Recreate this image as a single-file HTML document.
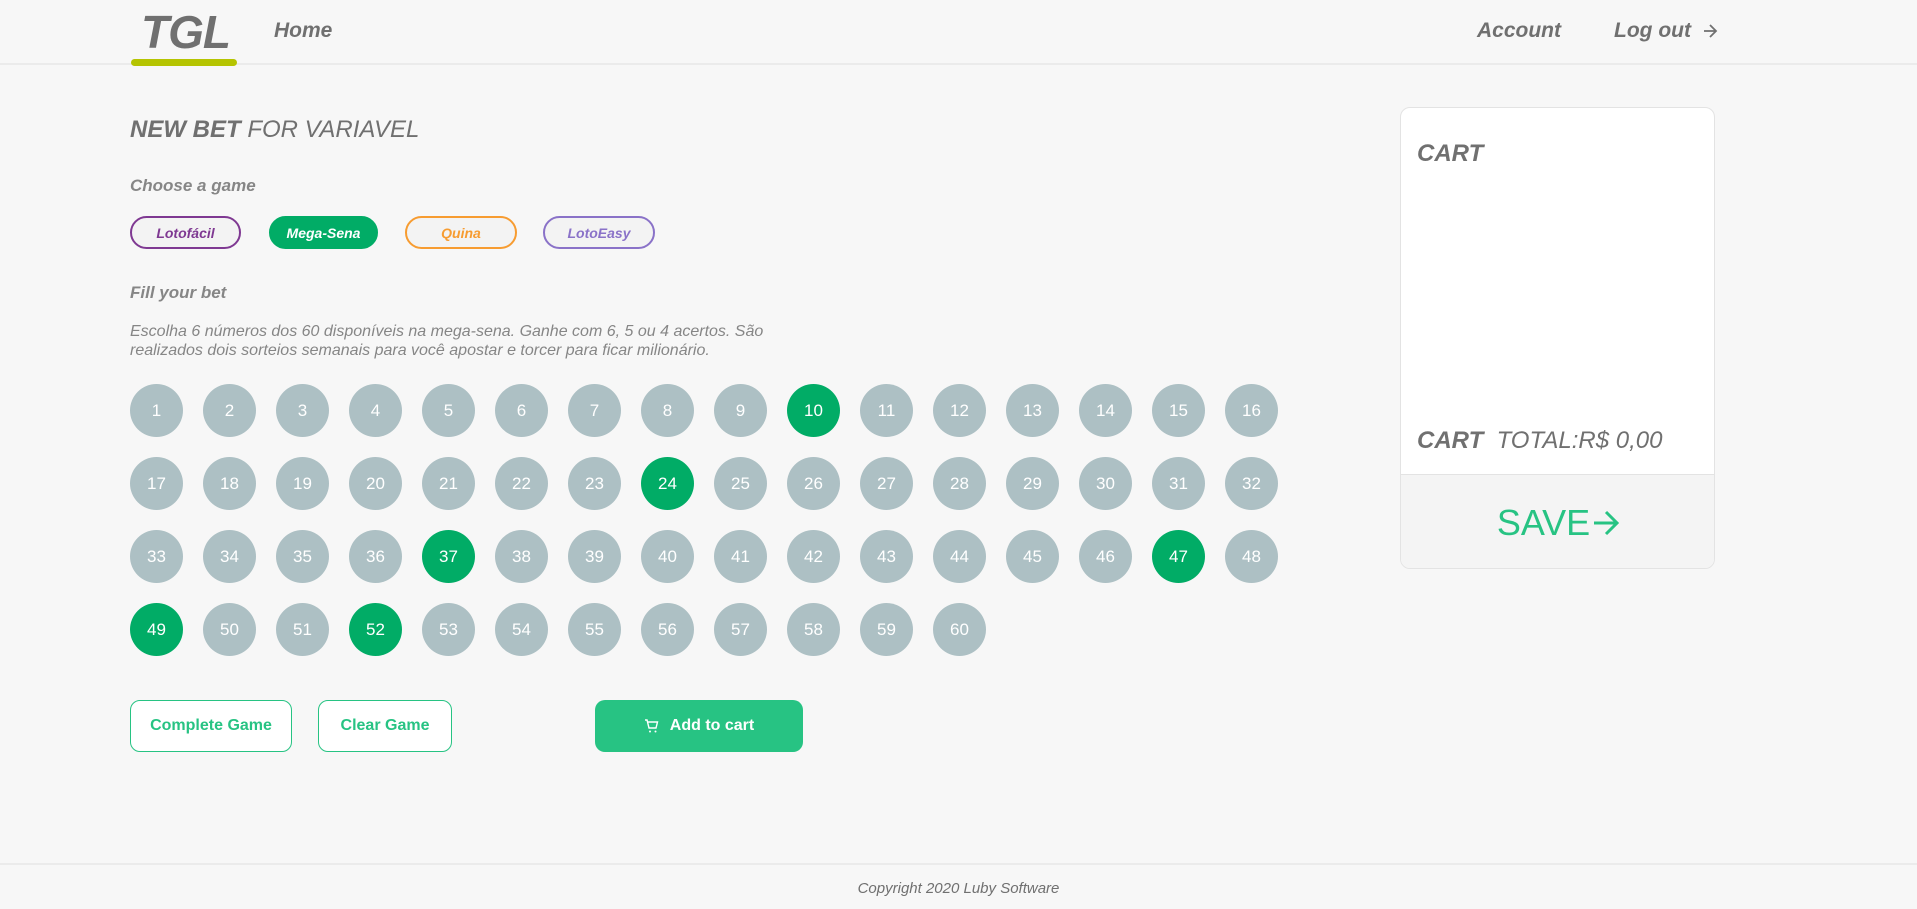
<!DOCTYPE html>
<html><head><meta charset="utf-8"><style>
*{box-sizing:border-box;margin:0;padding:0}
body{width:1917px;height:909px;background:#f7f7f7;font-family:"Liberation Sans",sans-serif;color:#707070;position:relative;overflow:hidden;font-style:italic}
.a{position:absolute;white-space:nowrap}
.hl{position:absolute;left:0;top:63px;width:1917px;height:2px;background:#ebebeb}
.g{position:absolute;top:216px;height:33px;border-radius:17px;border:2px solid;background:#f3f3f3;font-size:14px;font-weight:bold;display:flex;align-items:center;justify-content:center}
.n{position:absolute;width:53px;height:53px;border-radius:50%;background:#adc0c4;color:#fff;font-style:normal;font-size:17px;display:flex;align-items:center;justify-content:center}
.n.s{background:#01ac66}
.b{position:absolute;top:700px;height:52px;border-radius:10px;border:1px solid #27c383;background:#fff;color:#27c383;font-weight:bold;font-style:normal;font-size:16px;display:flex;align-items:center;justify-content:center}
</style></head><body>
<div class="a" style="left:141px;top:5px;font-size:46px;font-weight:bold;letter-spacing:-1px">TGL</div>
<div class="a" style="left:131px;top:59px;width:106px;height:7px;background:#b5c401;border-radius:4px;z-index:2"></div>
<div class="a" style="left:274px;top:19px;font-size:21px;font-weight:bold">Home</div>
<div class="a" style="left:1477px;top:19px;font-size:21px;font-weight:bold">Account</div>
<div class="a" style="left:1614px;top:19px;font-size:21px;font-weight:bold">Log out</div>
<svg class="a" style="left:1702px;top:23px" width="16" height="16" viewBox="0 0 16 16"><path d="M2 8h12M8 2l6 6-6 6" stroke="#707070" stroke-width="1.8" fill="none"/></svg>
<div class="hl"></div>
<div class="a" style="left:130px;top:116px;font-size:24px"><b>NEW BET</b> FOR VARIAVEL</div>
<div class="a" style="left:130px;top:176px;font-size:17px;font-weight:bold;color:#868686">Choose a game</div>
<div class="g" style="left:130px;width:111px;border-color:#7f3992;color:#7f3992">Lotofácil</div>
<div class="g" style="left:269px;width:109px;border-color:#01ac66;background:#01ac66;color:#fff">Mega-Sena</div>
<div class="g" style="left:405px;width:112px;border-color:#f79c31;color:#f79c31">Quina</div>
<div class="g" style="left:543px;width:112px;border-color:#8a72c8;color:#8a72c8">LotoEasy</div>
<div class="a" style="left:130px;top:283px;font-size:17px;font-weight:bold;color:#868686">Fill your bet</div>
<div class="a" style="left:130px;top:322px;font-size:16px;line-height:19px;color:#868686">Escolha 6 números dos 60 disponíveis na mega-sena. Ganhe com 6, 5 ou 4 acertos. São<br>realizados dois sorteios semanais para você apostar e torcer para ficar milionário.</div>
<div id="grid"></div>
<div class="b" style="left:130px;width:162px">Complete Game</div>
<div class="b" style="left:318px;width:134px">Clear Game</div>
<div class="b" style="left:595px;width:208px;background:#27c383;color:#fff;border:none"><svg width="16" height="16" viewBox="0 0 16 16" style="margin-right:10px"><path d="M1 2h2l2 8h7l1.5-6H4" stroke="#fff" stroke-width="1.4" fill="none"/><circle cx="6" cy="13.5" r="1" fill="#fff"/><circle cx="11.5" cy="13.5" r="1" fill="#fff"/></svg>Add to cart</div>
<div class="a" style="left:1400px;top:107px;width:315px;height:462px;background:#fff;border:1px solid #e3e3e3;border-radius:10px;overflow:hidden">
 <div class="a" style="left:16px;top:32px;font-size:24px;font-weight:bold">CART</div>
 <div class="a" style="left:16px;top:319px;font-size:24px"><b>CART</b>&nbsp; TOTAL:R$ 0,00</div>
 <div class="a" style="left:0;top:366px;width:315px;height:96px;background:#f4f4f4;border-top:1px solid #e3e3e3;display:flex;align-items:center;justify-content:center;color:#27c383;font-style:normal;font-size:36px">SAVE<svg width="28" height="28" viewBox="0 0 28 28" style="margin-left:2px"><path d="M2 14h23M14 3l11 11-11 11" stroke="#27c383" stroke-width="3" fill="none"/></svg></div>
</div>
<div class="a" style="left:0;top:863px;width:1917px;height:2px;background:#ebebeb"></div>
<div class="a" style="left:0;top:880px;width:1917px;text-align:center;font-size:15px">Copyright 2020 Luby Software</div>
<script>
var sel=[10,24,37,47,49,52],h='';
for(var i=1;i<=60;i++){var c=(i-1)%16,r=Math.floor((i-1)/16);
h+='<div class="n'+(sel.indexOf(i)>=0?' s':'')+'" style="left:'+(130+c*73)+'px;top:'+(384+r*73)+'px">'+i+'</div>';}
document.getElementById('grid').innerHTML=h;
</script>
</body></html>
